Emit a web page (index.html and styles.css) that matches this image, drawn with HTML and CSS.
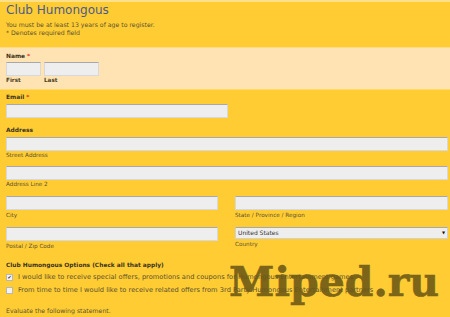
FILE: index.html
```html
<!DOCTYPE html>
<html>
<head>
  <title>Club Humongous</title>
  <link rel="stylesheet" href="styles.css">
</head>
<body>
  <div class="page">
    <div class="header">
      <h1>Club Humongous</h1>
      <p>You must be at least 13 years of age to register.</p>
      <p>* Denotes required field</p>
    </div>

    <div class="section name-section">
      <label class="field-label">Name <span class="req">*</span></label>
      <div class="name-row">
        <div class="name-col">
          <input type="text" class="first">
          <span class="sub">First</span>
        </div>
        <div class="name-col">
          <input type="text" class="last">
          <span class="sub">Last</span>
        </div>
      </div>
    </div>

    <div class="section main-section">
      <label class="field-label">Email <span class="req">*</span></label>
      <input type="text" class="email">

      <label class="field-label address-label">Address</label>
      <input type="text" class="wide">
      <span class="sub">Street Address</span>
      <input type="text" class="wide line2">
      <span class="sub">Address Line 2</span>

      <div class="two-col">
        <div class="col">
          <input type="text">
          <span class="sub">City</span>
        </div>
        <div class="col">
          <input type="text">
          <span class="sub">State / Province / Region</span>
        </div>
        <div class="col">
          <input type="text">
          <span class="sub">Postal / Zip Code</span>
        </div>
        <div class="col">
          <div class="select">United States<span class="arrow">&#9660;</span></div>
          <span class="sub">Country</span>
        </div>
      </div>

      <label class="field-label options-label">Club Humongous Options (Check all that apply)</label>
      <div class="check-row first-check">
        <span class="box">&#10004;</span>
        <span>I would like to receive special offers, promotions and coupons for Humongous Entertainment games</span>
      </div>
      <div class="check-row">
        <span class="box"></span>
        <span>From time to time I would like to receive related offers from 3rd Party Humongous Entertainment partners</span>
      </div>

      <p class="evaluate">Evaluate the following statement.</p>
    </div>

    <div class="watermark">Miped.ru</div>
  </div>
</body>
</html>
```

FILE: styles.css
```css
  body {
    margin: 0;
    padding: 0;
    background-color: #ffcc33;
    font-family: "DejaVu Sans", Verdana, sans-serif;
    color: #5b5232;
  }

  .page {
    position: relative;
    width: 450px;
    height: 317px;
    overflow: hidden;
    border-top: 2px solid #ffe08a;
    box-sizing: border-box;
  }

  .header {
    padding: 0 6px;
    height: 45px;
    box-sizing: border-box;
  }

  h1 {
    margin: 0 0 2px;
    font-size: 12px;
    line-height: 17px;
    font-weight: normal;
    color: #4b5b8c;
  }

  .header p {
    margin: 0;
    font-size: 6.2px;
    line-height: 8px;
  }

  .section {
    padding: 0 6px;
  }

  .name-section {
    background-color: #ffe3b3;
    border-top: 1px solid #ffd98a;
    height: 42px;
    box-sizing: border-box;
    padding-top: 4px;
  }

  .main-section {
    border-top: 1px solid #ffda66;
    padding-top: 3px;
  }

  .field-label {
    display: block;
    font-size: 5.9px;
    line-height: 8px;
    font-weight: bold;
    color: #3a3320;
  }

  .req {
    color: #e8322a;
  }

  .name-row {
    display: flex;
    gap: 3px;
    margin-top: 2px;
  }

  .name-col {
    display: flex;
    flex-direction: column;
  }

  input[type="text"] {
    display: block;
    height: 14px;
    margin: 0;
    padding: 0;
    border: 1px solid #d8d8d8;
    border-top-color: #a8a8a8;
    background-color: #eeeeee;
    box-sizing: border-box;
  }

  .first {
    width: 35px;
  }

  .last {
    width: 55px;
  }

  .sub {
    display: block;
    font-size: 5.7px;
    line-height: 7px;
    margin-top: 1px;
  }

  .name-col .sub {
    font-weight: bold;
    color: #4a4226;
  }

  .email {
    width: 222px;
    margin-top: 3px !important;
  }

  .address-label {
    margin-top: 8px;
  }

  .wide {
    width: 442px;
    margin-top: 3px !important;
  }

  .line2 {
    margin-top: 7px !important;
  }

  .two-col {
    display: grid;
    grid-template-columns: 212px 213px;
    column-gap: 17px;
    row-gap: 8px;
    margin-top: 8px;
  }

  .col input[type="text"] {
    width: 100%;
  }

  .col .sub {
    margin-top: 2px;
  }

  .select {
    height: 12px;
    border: 1px solid #d0d0d0;
    border-top-color: #a8a8a8;
    background-color: #eeeeee;
    box-sizing: border-box;
    font-size: 6px;
    line-height: 10px;
    padding-left: 2px;
    color: #333;
    display: flex;
    justify-content: space-between;
  }

  .arrow {
    font-size: 4px;
    padding-right: 2px;
    color: #111;
  }

  .options-label {
    margin-top: 11px;
  }

  .check-row {
    display: flex;
    align-items: center;
    gap: 5px;
    font-size: 6.7px;
    line-height: 8px;
    margin-top: 5px;
    white-space: nowrap;
  }

  .first-check {
    margin-top: 4px;
  }

  .box {
    width: 7px;
    height: 7px;
    border: 1px solid #b8b8b8;
    background-color: #f2f2f2;
    box-sizing: border-box;
    font-size: 5px;
    line-height: 5px;
    text-align: center;
    color: #333;
  }

  .evaluate {
    margin: 13px 0 0;
    font-size: 6.2px;
    line-height: 8px;
  }

  .watermark {
    position: absolute;
    left: 229px;
    top: 258px;
    font-family: "DejaVu Serif", serif;
    font-weight: bold;
    font-size: 41px;
    line-height: 44px;
    color: #6a5716;
    -webkit-text-stroke: 0.6px #6a5716;
    opacity: 0.88;
  }
```
